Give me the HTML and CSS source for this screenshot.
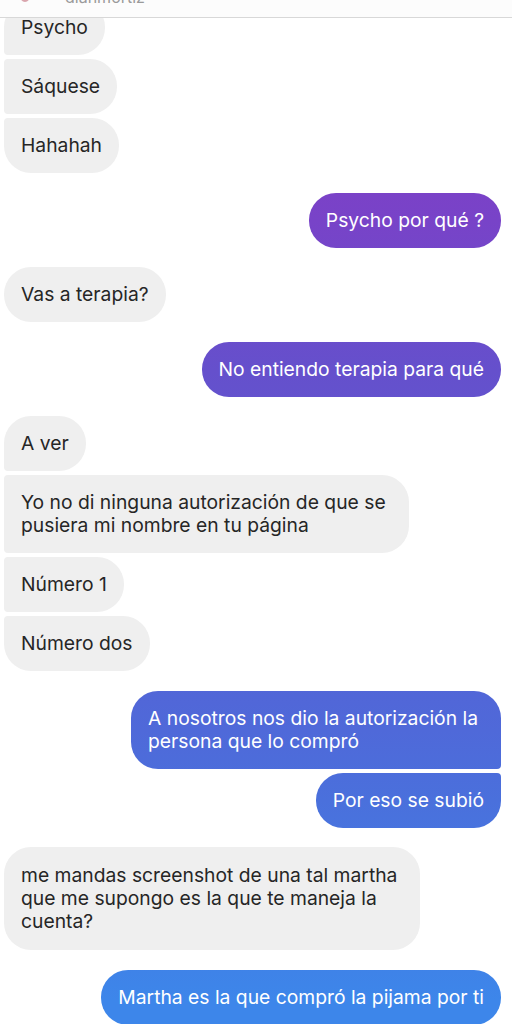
FILE: index.html
```html
<!DOCTYPE html>
<html lang="es">
<head>
    <meta charset="UTF-8">
    <meta name="viewport" content="width=device-width, initial-scale=1.0">
    <title>Mensajes</title>
    <link rel="stylesheet" href="styles.css">
</head>
<body>
    <div class="topbar">
        <span class="avatar"></span>
        <span class="name">dianmortiz</span>
    </div>

    <div class="thread">
        <div class="group in">
            <div class="msg">Psycho</div>
            <div class="msg">Sáquese</div>
            <div class="msg">Hahahah</div>
        </div>
        <div class="group out">
            <div class="msg">Psycho por qué ?</div>
        </div>
        <div class="group in">
            <div class="msg">Vas a terapia?</div>
        </div>
        <div class="group out">
            <div class="msg">No entiendo terapia para qué</div>
        </div>
        <div class="group in">
            <div class="msg">A ver</div>
            <div class="msg multi">Yo no di ninguna autorización de que se<br>pusiera mi nombre en tu página</div>
            <div class="msg">Número 1</div>
            <div class="msg">Número dos</div>
        </div>
        <div class="group out">
            <div class="msg multi">A nosotros nos dio la autorización la<br>persona que lo compró</div>
            <div class="msg">Por eso se subió</div>
        </div>
        <div class="group in">
            <div class="msg multi long">me mandas screenshot de una tal martha<br>que me supongo es la que te maneja la<br>cuenta?</div>
        </div>
        <div class="group out">
            <div class="msg">Martha es la que compró la pijama por ti</div>
        </div>
    </div>
</body>
</html>
```

FILE: styles.css
```css
body {
    margin: 0;
    background-color: #fff;
    font-family: Inter, "Noto Sans", sans-serif;
    color: #262626;
    overflow: hidden;
}
.topbar {
    position: absolute;
    top: 0;
    left: 0;
    right: 0;
    height: 18px;
    box-sizing: border-box;
    padding: 0 0 15px 17px;
    display: flex;
    align-items: flex-end;
    gap: 32px;
    overflow: hidden;
    background-color: #fcfcfc;
    border-bottom: 1px solid #d8d8d8;
    z-index: 2;
}
.avatar {
    flex: none;
    width: 12px;
    height: 30px;
    border: 2px solid #d9a5ad;
    border-radius: 50%;
}
.name {
    font-size: 16px;
    line-height: 15px;
    color: #9a9a9a;
    margin-bottom: -3px;
}
.thread {
    display: flex;
    flex-direction: column;
    gap: 19.5px;
    padding: 0 11px 0 4px;
}
.group {
    display: flex;
    flex-direction: column;
    gap: 4px;
}
.group.in {
    align-items: flex-start;
}
.group.out {
    align-items: flex-end;
}
.msg {
    padding: 16px 17px;
    font-size: 19.3px;
    line-height: 23px;
    border-radius: 27px;
}
.msg.multi {
    padding-right: 23px;
}
.msg.long {
    padding-top: 17px;
    padding-bottom: 17px;
}
.in .msg {
    background-color: #efefef;
    color: #262626;
}
.out .msg {
    color: #fff;
    background-image: linear-gradient(to bottom, #8a3ac4 0, #7843c8 220px, #6550cc 370px, #4f69d9 730px, #4a70dc 800px, #3d86ea 1000px);
    background-attachment: fixed;
}
.in .msg:not(:last-child) {
    border-bottom-left-radius: 4px;
}
.in .msg:not(:first-child) {
    border-top-left-radius: 4px;
}
.out .msg:not(:last-child) {
    border-bottom-right-radius: 4px;
}
.out .msg:not(:first-child) {
    border-top-right-radius: 4px;
}
```
